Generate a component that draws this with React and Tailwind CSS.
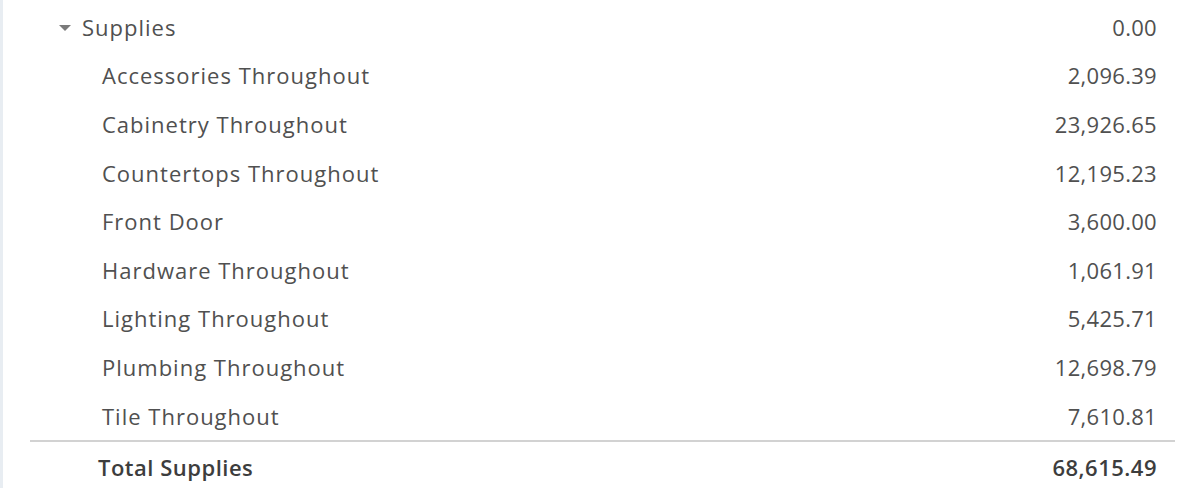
import React from "react";

const items = [
  { name: "Accessories Throughout", amount: "2,096.39" },
  { name: "Cabinetry Throughout", amount: "23,926.65" },
  { name: "Countertops Throughout", amount: "12,195.23" },
  { name: "Front Door", amount: "3,600.00" },
  { name: "Hardware Throughout", amount: "1,061.91" },
  { name: "Lighting Throughout", amount: "5,425.71" },
  { name: "Plumbing Throughout", amount: "12,698.79" },
  { name: "Tile Throughout", amount: "7,610.81" },
];

const App = () => {
  return (
    <div
      className="flex h-[488px] w-[1200px] overflow-hidden bg-white text-[22px] text-[#505050]"
      style={{ fontFamily: "'Open Sans', 'Noto Sans', sans-serif" }}
    >
      {/* left rail */}
      <div className="w-[3px] shrink-0 bg-[#e8edf2]" />

      <div className="flex-1 pt-[3px]">
        {/* group header */}
        <div className="flex h-[48.6px] items-center pl-[55px] pr-[43px]">
          <svg width="14" height="8" viewBox="0 0 14 8" className="mr-[10px] mt-[2px]">
            <path d="M1 1 L13 1 L7 7 Z" fill="#7a7a7a" />
          </svg>
          <span className="flex-1 tracking-[1px]">Supplies</span>
          <span className="tracking-[0.3px]">0.00</span>
        </div>

        {/* rows */}
        {items.map((item) => (
          <div
            key={item.name}
            className="flex h-[48.6px] items-center pl-[99px] pr-[43px]"
          >
            <span className="flex-1 tracking-[1px]">{item.name}</span>
            <span className="tracking-[0.3px]">{item.amount}</span>
          </div>
        ))}

        {/* total */}
        <div className="ml-[27px] mr-[25px] h-[2px] bg-[#d2d2d2]" />
        <div className="flex h-[50px] items-center pl-[95px] pr-[43px] font-semibold tracking-[0.5px] text-[#3d3d3d]">
          <span className="flex-1">Total Supplies</span>
          <span>68,615.49</span>
        </div>
      </div>
    </div>
  );
};

export default App;
